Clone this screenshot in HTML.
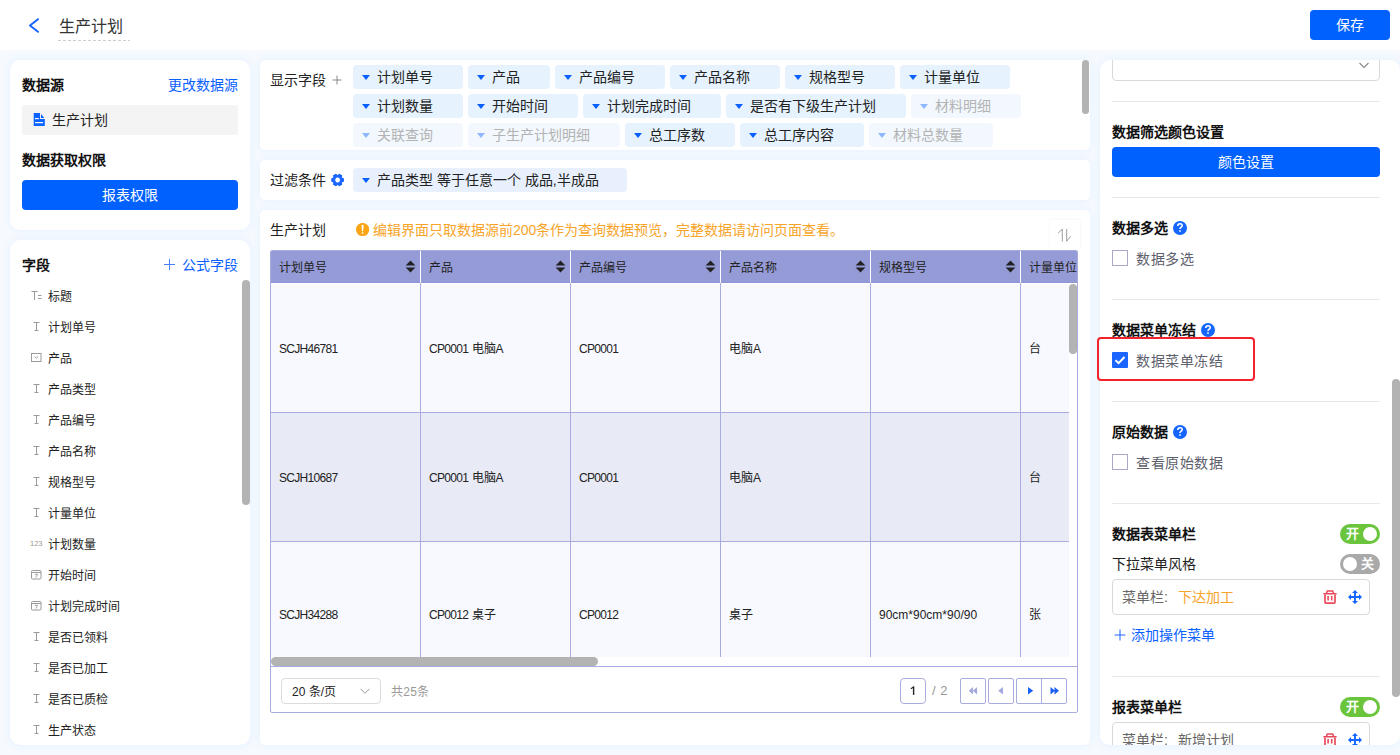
<!DOCTYPE html>
<html lang="zh-CN"><head><meta charset="utf-8">
<style>
*{box-sizing:border-box;margin:0;padding:0}
html,body{width:1400px;height:755px;overflow:hidden}
body{font-family:"Liberation Sans",sans-serif;background:#f6faff;color:#1a1a1a;position:relative;font-size:14px}
.a{position:absolute;white-space:nowrap}
.hdr{left:0;top:0;width:1400px;height:50px;background:#fff}
.card{background:#fff;border-radius:10px;box-shadow:0 0 8px rgba(40,130,250,0.09)}
.pan{background:#fff;border-radius:5px;box-shadow:0 0 8px rgba(40,130,250,0.09)}
.t14{font-size:14px;line-height:14px}
.t12{font-size:12px;line-height:12px}
.b{font-weight:bold;color:#111}
.blue{color:#0a5fff}
.btn{background:#0061ff;color:#fff;border-radius:4px;text-align:center}
.tag{height:24px;border-radius:4px;background:#e6f2fe;color:#222;font-size:14px;line-height:24px;padding-left:24px}
.tag i{position:absolute;left:8.5px;top:9.5px;width:0;height:0;border-left:4.5px solid transparent;border-right:4.5px solid transparent;border-top:5.5px solid #0a5fff}
.tag.dis{background:#f2f8fe;color:#b3b3b3}
.tag.dis i{border-top-color:#8db8ff}
.cell{font-size:12px;line-height:12px;color:#222}
.lt{letter-spacing:-0.7px}
</style></head><body>
<div class="a hdr"></div>
<svg class="a" style="left:27px;top:16px" width="14" height="19" viewBox="0 0 14 19"><path d="M11 3.2 L3 9.5 L11 15.8" fill="none" stroke="#1764ff" stroke-width="2" stroke-linecap="round" stroke-linejoin="round"/></svg>
<div class="a" style="left:59px;top:19px;font-size:16px;line-height:16px;color:#333">生产计划</div>
<div class="a" style="left:58px;top:40px;width:72px;height:1px;background:repeating-linear-gradient(90deg,#cfcfcf 0 3px,transparent 3px 5px)"></div>
<div class="a btn" style="left:1310px;top:10px;width:80px;height:30px;line-height:30px;font-size:14px">保存</div>
<div class="a card" style="left:10px;top:60px;width:240px;height:170px"></div>
<div class="a t14 b" style="left:22px;top:78px">数据源</div>
<div class="a t14 blue" style="left:168px;top:78px">更改数据源</div>
<div class="a" style="left:22px;top:105px;width:216px;height:30px;background:#f4f4f4;border-radius:2px"></div>
<svg class="a" style="left:33px;top:113px" width="12" height="13" viewBox="0 0 12 13"><path d="M0.7 0H7V6H11.8V13H0.7z" fill="#0d63ff"/><path d="M8 1L11.4 5H8z" fill="#0d63ff"/><rect x="2" y="5" width="3.8" height="1.2" fill="#fff"/><rect x="2" y="9" width="8" height="1.2" fill="#fff"/></svg>
<div class="a t14" style="left:52px;top:113px;color:#222">生产计划</div>
<div class="a t14 b" style="left:22px;top:153px">数据获取权限</div>
<div class="a btn" style="left:22px;top:180px;width:216px;height:30px;line-height:30px">报表权限</div>
<div class="a card" style="left:10px;top:240px;width:240px;height:505px"></div>
<div class="a t14 b" style="left:22px;top:258px">字段</div>
<svg class="a" style="left:164px;top:259px" width="11" height="11" viewBox="0 0 11 11"><path d="M5.5 0V11M0 5.5H11" stroke="#4a80ff" stroke-width="1"/></svg>
<div class="a t14 blue" style="left:182px;top:258px">公式字段</div>
<div class="a" style="left:242px;top:280px;width:8px;height:225px;background:#b3b3b3;border-radius:4px"></div>
<div class="a t12" style="left:48px;top:291px;color:#222">标题</div>
<svg class="a" style="left:31px;top:290px" width="11" height="11" viewBox="0 0 11 11"><path d="M0.5 1.5H6.5M3.5 1.5V10M7 5.5H10.5M7 8.5H10.5" stroke="#9a9a9a" stroke-width="1" fill="none"/></svg>
<div class="a t12" style="left:48px;top:322px;color:#222">计划单号</div>
<svg class="a" style="left:32px;top:321px" width="9" height="11" viewBox="0 0 9 11"><path d="M1.5 1.5H7.5M4.5 1.5V9.5M2.5 9.5H6.5" stroke="#9a9a9a" stroke-width="1" fill="none"/></svg>
<div class="a t12" style="left:48px;top:353px;color:#222">产品</div>
<svg class="a" style="left:30px;top:352px" width="12" height="11" viewBox="0 0 12 11"><rect x="1.5" y="1.5" width="9.5" height="8" fill="none" stroke="#9a9a9a" stroke-width="1"/><path d="M4.5 4.5L6.25 6.2L8 4.5" stroke="#9a9a9a" stroke-width="1" fill="none"/></svg>
<div class="a t12" style="left:48px;top:384px;color:#222">产品类型</div>
<svg class="a" style="left:32px;top:383px" width="9" height="11" viewBox="0 0 9 11"><path d="M1.5 1.5H7.5M4.5 1.5V9.5M2.5 9.5H6.5" stroke="#9a9a9a" stroke-width="1" fill="none"/></svg>
<div class="a t12" style="left:48px;top:415px;color:#222">产品编号</div>
<svg class="a" style="left:32px;top:414px" width="9" height="11" viewBox="0 0 9 11"><path d="M1.5 1.5H7.5M4.5 1.5V9.5M2.5 9.5H6.5" stroke="#9a9a9a" stroke-width="1" fill="none"/></svg>
<div class="a t12" style="left:48px;top:446px;color:#222">产品名称</div>
<svg class="a" style="left:32px;top:445px" width="9" height="11" viewBox="0 0 9 11"><path d="M1.5 1.5H7.5M4.5 1.5V9.5M2.5 9.5H6.5" stroke="#9a9a9a" stroke-width="1" fill="none"/></svg>
<div class="a t12" style="left:48px;top:477px;color:#222">规格型号</div>
<svg class="a" style="left:32px;top:476px" width="9" height="11" viewBox="0 0 9 11"><path d="M1.5 1.5H7.5M4.5 1.5V9.5M2.5 9.5H6.5" stroke="#9a9a9a" stroke-width="1" fill="none"/></svg>
<div class="a t12" style="left:48px;top:508px;color:#222">计量单位</div>
<svg class="a" style="left:32px;top:507px" width="9" height="11" viewBox="0 0 9 11"><path d="M1.5 1.5H7.5M4.5 1.5V9.5M2.5 9.5H6.5" stroke="#9a9a9a" stroke-width="1" fill="none"/></svg>
<div class="a t12" style="left:48px;top:539px;color:#222">计划数量</div>
<div class="a" style="left:30px;top:540px;font-size:7.5px;line-height:8px;color:#9a9a9a;letter-spacing:0px">123</div>
<div class="a t12" style="left:48px;top:570px;color:#222">开始时间</div>
<svg class="a" style="left:30px;top:569px" width="12" height="11" viewBox="0 0 12 11"><rect x="1.5" y="1.5" width="9.5" height="8.5" rx="1" fill="none" stroke="#9a9a9a" stroke-width="1"/><path d="M1.5 3.5H11" stroke="#9a9a9a" stroke-width="1"/><path d="M4.8 5.3H7.6L5.8 8.5" stroke="#9a9a9a" stroke-width="0.9" fill="none"/></svg>
<div class="a t12" style="left:48px;top:601px;color:#222">计划完成时间</div>
<svg class="a" style="left:30px;top:600px" width="12" height="11" viewBox="0 0 12 11"><rect x="1.5" y="1.5" width="9.5" height="8.5" rx="1" fill="none" stroke="#9a9a9a" stroke-width="1"/><path d="M1.5 3.5H11" stroke="#9a9a9a" stroke-width="1"/><path d="M4.8 5.3H7.6L5.8 8.5" stroke="#9a9a9a" stroke-width="0.9" fill="none"/></svg>
<div class="a t12" style="left:48px;top:632px;color:#222">是否已领料</div>
<svg class="a" style="left:32px;top:631px" width="9" height="11" viewBox="0 0 9 11"><path d="M1.5 1.5H7.5M4.5 1.5V9.5M2.5 9.5H6.5" stroke="#9a9a9a" stroke-width="1" fill="none"/></svg>
<div class="a t12" style="left:48px;top:663px;color:#222">是否已加工</div>
<svg class="a" style="left:32px;top:662px" width="9" height="11" viewBox="0 0 9 11"><path d="M1.5 1.5H7.5M4.5 1.5V9.5M2.5 9.5H6.5" stroke="#9a9a9a" stroke-width="1" fill="none"/></svg>
<div class="a t12" style="left:48px;top:694px;color:#222">是否已质检</div>
<svg class="a" style="left:32px;top:693px" width="9" height="11" viewBox="0 0 9 11"><path d="M1.5 1.5H7.5M4.5 1.5V9.5M2.5 9.5H6.5" stroke="#9a9a9a" stroke-width="1" fill="none"/></svg>
<div class="a t12" style="left:48px;top:725px;color:#222">生产状态</div>
<svg class="a" style="left:32px;top:724px" width="9" height="11" viewBox="0 0 9 11"><path d="M1.5 1.5H7.5M4.5 1.5V9.5M2.5 9.5H6.5" stroke="#9a9a9a" stroke-width="1" fill="none"/></svg>
<div class="a pan" style="left:260px;top:60px;width:830px;height:90px"></div>
<div class="a t14" style="left:270px;top:73px;color:#222">显示字段</div>
<svg class="a" style="left:332px;top:75px" width="10" height="10" viewBox="0 0 10 10"><path d="M5 0.5V9.5M0.5 5H9.5" stroke="#888" stroke-width="1"/></svg>
<div class="a tag" style="left:353px;top:65px;width:110px"><i></i>计划单号</div>
<div class="a tag" style="left:468px;top:65px;width:82px"><i></i>产品</div>
<div class="a tag" style="left:555px;top:65px;width:110px"><i></i>产品编号</div>
<div class="a tag" style="left:670px;top:65px;width:110px"><i></i>产品名称</div>
<div class="a tag" style="left:785px;top:65px;width:110px"><i></i>规格型号</div>
<div class="a tag" style="left:900px;top:65px;width:110px"><i></i>计量单位</div>
<div class="a tag" style="left:353px;top:94px;width:110px"><i></i>计划数量</div>
<div class="a tag" style="left:468px;top:94px;width:110px"><i></i>开始时间</div>
<div class="a tag" style="left:583px;top:94px;width:138px"><i></i>计划完成时间</div>
<div class="a tag" style="left:726px;top:94px;width:180px"><i></i>是否有下级生产计划</div>
<div class="a tag dis" style="left:911px;top:94px;width:110px"><i></i>材料明细</div>
<div class="a tag dis" style="left:353px;top:123px;width:110px"><i></i>关联查询</div>
<div class="a tag dis" style="left:468px;top:123px;width:152px"><i></i>子生产计划明细</div>
<div class="a tag" style="left:625px;top:123px;width:110px"><i></i>总工序数</div>
<div class="a tag" style="left:740px;top:123px;width:124px"><i></i>总工序内容</div>
<div class="a tag dis" style="left:869px;top:123px;width:124px"><i></i>材料总数量</div>
<div class="a" style="left:1082px;top:60px;width:7px;height:54px;background:#b3b3b3;border-radius:4px"></div>
<div class="a pan" style="left:260px;top:160px;width:830px;height:40px"></div>
<div class="a t14" style="left:270px;top:173px;color:#222">过滤条件</div>
<svg class="a" style="left:331px;top:173px" width="14" height="14" viewBox="0 0 14 14"><path fill="#1a66ff" fill-rule="evenodd" d="M10.93 4.50 L13.00 5.40 L13.00 8.60 L10.93 9.50 L11.18 11.75 L8.42 13.34 L6.60 12.00 L4.78 13.34 L2.02 11.75 L2.27 9.50 L0.20 8.60 L0.20 5.40 L2.27 4.50 L2.02 2.25 L4.78 0.66 L6.60 2.00 L8.42 0.66 L11.18 2.25z M6.6 4.6a2.4 2.4 0 1 0 0.001 0z"/></svg>
<div class="a" style="left:353px;top:168px;width:274px;height:24px;border-radius:4px;background:#e8f0fd;font-size:14px;line-height:24px;padding-left:24px;color:#222"><i style="position:absolute;left:9px;top:10px;border-left:4px solid transparent;border-right:4px solid transparent;border-top:5px solid #0a5fff"></i>产品类型 等于任意一个 成品,半成品</div>
<div class="a pan" style="left:260px;top:210px;width:830px;height:535px"></div>
<div class="a t14" style="left:270px;top:223px;color:#222">生产计划</div>
<svg class="a" style="left:356px;top:223px" width="14" height="14" viewBox="0 0 14 14"><circle cx="6.6" cy="6.5" r="6.6" fill="#fba414"/><path d="M5.5 1.9H7.7L7.15 8.3H6.05z" fill="#fff"/><rect x="5.9" y="9.2" width="1.4" height="1.5" fill="#fff"/></svg>
<div class="a t14" style="left:373px;top:223px;color:#f7a42a">编辑界面只取数据源前200条作为查询数据预览，完整数据请访问页面查看。</div>
<div class="a" style="left:1050px;top:220px;width:30px;height:30px;background:#fff;box-shadow:0 0 3px rgba(0,0,0,0.06)"></div>
<svg class="a" style="left:1056px;top:227px" width="18" height="16" viewBox="0 0 18 16"><path d="M6.3 2V14.5M6.3 2.2L2.1 6.1M10.7 2V14.4M10.7 14.2L14.6 9.3" stroke="#9d9d9d" stroke-width="1" fill="none"/></svg>
<div class="a" style="left:270px;top:250px;width:808px;height:463px;border:1px solid #a9acdf;border-radius:2px;overflow:hidden;background:#fff">
<div class="a" style="left:0;top:0;width:808px;height:32px;background:#959bd6;border-bottom:1px solid #8d93d3"></div>
<div class="a t12" style="left:8px;top:11px;color:#222">计划单号</div>
<svg class="a" style="left:134px;top:9px" width="11" height="13" viewBox="0 0 11 13"><path d="M5.5 0.6L10.4 5.6H0.6z M5.5 12.4L10.4 7.4H0.6z" fill="#222"/></svg>
<div class="a" style="left:149px;top:0;width:1px;height:32px;background:#fff"></div>
<div class="a t12" style="left:158px;top:11px;color:#222">产品</div>
<svg class="a" style="left:284px;top:9px" width="11" height="13" viewBox="0 0 11 13"><path d="M5.5 0.6L10.4 5.6H0.6z M5.5 12.4L10.4 7.4H0.6z" fill="#222"/></svg>
<div class="a" style="left:299px;top:0;width:1px;height:32px;background:#fff"></div>
<div class="a t12" style="left:308px;top:11px;color:#222">产品编号</div>
<svg class="a" style="left:434px;top:9px" width="11" height="13" viewBox="0 0 11 13"><path d="M5.5 0.6L10.4 5.6H0.6z M5.5 12.4L10.4 7.4H0.6z" fill="#222"/></svg>
<div class="a" style="left:449px;top:0;width:1px;height:32px;background:#fff"></div>
<div class="a t12" style="left:458px;top:11px;color:#222">产品名称</div>
<svg class="a" style="left:584px;top:9px" width="11" height="13" viewBox="0 0 11 13"><path d="M5.5 0.6L10.4 5.6H0.6z M5.5 12.4L10.4 7.4H0.6z" fill="#222"/></svg>
<div class="a" style="left:599px;top:0;width:1px;height:32px;background:#fff"></div>
<div class="a t12" style="left:608px;top:11px;color:#222">规格型号</div>
<svg class="a" style="left:734px;top:9px" width="11" height="13" viewBox="0 0 11 13"><path d="M5.5 0.6L10.4 5.6H0.6z M5.5 12.4L10.4 7.4H0.6z" fill="#222"/></svg>
<div class="a" style="left:749px;top:0;width:1px;height:32px;background:#fff"></div>
<div class="a t12" style="left:758px;top:11px;color:#222">计量单位</div>
<div class="a" style="left:0;top:32px;width:798px;height:374px;overflow:hidden">
<div class="a" style="left:0;top:0px;width:798px;height:129px;background:#f8f9fe;border-top:1px solid #fff"></div>
<div class="a cell" style="left:8px;top:60px"><span class="lt">SCJH46781</span></div>
<div class="a" style="left:149px;top:0px;width:1px;height:129px;background:#a9acdf"></div>
<div class="a cell" style="left:158px;top:60px"><span class="lt">CP0001</span> 电脑<span class="lt">A</span></div>
<div class="a" style="left:299px;top:0px;width:1px;height:129px;background:#a9acdf"></div>
<div class="a cell" style="left:308px;top:60px"><span class="lt">CP0001</span></div>
<div class="a" style="left:449px;top:0px;width:1px;height:129px;background:#a9acdf"></div>
<div class="a cell" style="left:458px;top:60px">电脑<span class="lt">A</span></div>
<div class="a" style="left:599px;top:0px;width:1px;height:129px;background:#a9acdf"></div>
<div class="a" style="left:749px;top:0px;width:1px;height:129px;background:#a9acdf"></div>
<div class="a cell" style="left:758px;top:60px">台</div>
<div class="a" style="left:0;top:129px;width:798px;height:129px;background:#e8eaf6;border-top:1px solid #a9acdf"></div>
<div class="a cell" style="left:8px;top:189px"><span class="lt">SCJH10687</span></div>
<div class="a" style="left:149px;top:129px;width:1px;height:129px;background:#a9acdf"></div>
<div class="a cell" style="left:158px;top:189px"><span class="lt">CP0001</span> 电脑<span class="lt">A</span></div>
<div class="a" style="left:299px;top:129px;width:1px;height:129px;background:#a9acdf"></div>
<div class="a cell" style="left:308px;top:189px"><span class="lt">CP0001</span></div>
<div class="a" style="left:449px;top:129px;width:1px;height:129px;background:#a9acdf"></div>
<div class="a cell" style="left:458px;top:189px">电脑<span class="lt">A</span></div>
<div class="a" style="left:599px;top:129px;width:1px;height:129px;background:#a9acdf"></div>
<div class="a" style="left:749px;top:129px;width:1px;height:129px;background:#a9acdf"></div>
<div class="a cell" style="left:758px;top:189px">台</div>
<div class="a" style="left:0;top:258px;width:798px;height:169px;background:#f8f9fe;border-top:1px solid #a9acdf"></div>
<div class="a cell" style="left:8px;top:326px"><span class="lt">SCJH34288</span></div>
<div class="a" style="left:149px;top:258px;width:1px;height:169px;background:#a9acdf"></div>
<div class="a cell" style="left:158px;top:326px"><span class="lt">CP0012</span> 桌子</div>
<div class="a" style="left:299px;top:258px;width:1px;height:169px;background:#a9acdf"></div>
<div class="a cell" style="left:308px;top:326px"><span class="lt">CP0012</span></div>
<div class="a" style="left:449px;top:258px;width:1px;height:169px;background:#a9acdf"></div>
<div class="a cell" style="left:458px;top:326px">桌子</div>
<div class="a" style="left:599px;top:258px;width:1px;height:169px;background:#a9acdf"></div>
<div class="a cell" style="left:608px;top:326px">90cm*90cm*90/90</div>
<div class="a" style="left:749px;top:258px;width:1px;height:169px;background:#a9acdf"></div>
<div class="a cell" style="left:758px;top:326px">张</div>
</div>
<div class="a" style="left:798px;top:32px;width:10px;height:383px;background:#fff"></div>
<div class="a" style="left:798px;top:33px;width:8px;height:70px;background:#b3b3b3;border-radius:4px"></div>
<div class="a" style="left:0;top:406px;width:808px;height:9px;background:#fff"></div>
<div class="a" style="left:0;top:406px;width:327px;height:9px;background:#b3b3b3;border-radius:4.5px"></div>
<div class="a" style="left:0;top:415px;width:808px;height:1px;background:#a9acdf"></div>
<div class="a" style="left:10px;top:427px;width:100px;height:26px;border:1px solid #dcdcdc;border-radius:4px"></div>
<div class="a t12" style="left:21px;top:435px;color:#222">20 条/页</div>
<svg class="a" style="left:88px;top:436px" width="12" height="8" viewBox="0 0 12 8"><path d="M1.5 1.8L6 6.3L10.5 1.8" stroke="#999" stroke-width="1" fill="none"/></svg>
<div class="a t12" style="left:120px;top:435px;color:#999;letter-spacing:0.3px">共25条</div>
<div class="a" style="left:629px;top:427px;width:26px;height:26px;border:1px solid #a9acdf;border-radius:4px"></div><svg class="a" style="left:639px;top:435px" width="6" height="10" viewBox="0 0 6 10"><path d="M3.6 0.4V8.9" stroke="#222" stroke-width="1.4"/><path d="M3.6 0.9L0.9 2.8" stroke="#222" stroke-width="1.1"/></svg>
<div class="a" style="left:661px;top:433px;font-size:13px;line-height:13px;color:#999;letter-spacing:0.5px">/ 2</div>
<div class="a" style="left:689px;top:427px;width:26px;height:26px;border:1px solid #a9acdf;border-radius:2px"></div>
<div class="a" style="left:717px;top:427px;width:26px;height:26px;border:1px solid #a9acdf;border-radius:2px"></div>
<div class="a" style="left:745px;top:427px;width:51px;height:26px;border:1px solid #a9acdf;border-radius:2px"></div>
<div class="a" style="left:770px;top:427px;width:1px;height:26px;background:#a9acdf"></div>
<svg class="a" style="left:689px;top:427px" width="108" height="26" viewBox="0 0 108 26">
<path d="M13 9L8.7 12.8L13 16.6z M17.1 9L12.8 12.8L17.1 16.6z" fill="#a4a9de"/>
<path d="M43 9L38.2 12.8L43 16.6z" fill="#a4a9de"/>
<path d="M68 9L73.2 12.8L68 16.6z" fill="#1a5ff5"/>
<path d="M90.5 9L95 12.8L90.5 16.6z M94.5 9L99 12.8L94.5 16.6z" fill="#1a5ff5"/>
</svg>
</div>
<div class="a card" style="left:1100px;top:60px;width:300px;height:685px;border-radius:10px"></div>
<div class="a" style="left:1100px;top:60px;width:300px;height:685px;overflow:hidden;border-radius:10px"><div class="a" style="left:-1100px;top:-60px;width:1400px;height:755px">
<div class="a" style="left:1112px;top:40px;width:268px;height:41px;border:1px solid #d9d9d9;border-radius:4px;background:#fff"></div>
<svg class="a" style="left:1358px;top:61px" width="12" height="9" viewBox="0 0 12 9"><path d="M1.5 2L6 6.5L10.5 2" stroke="#888" stroke-width="1.1" fill="none"/></svg>
<div class="a" style="left:1112px;top:101px;width:268px;height:1px;background:#e8e8e8"></div>
<div class="a t14 b" style="left:1112px;top:125px">数据筛选颜色设置</div>
<div class="a btn" style="left:1112px;top:147px;width:268px;height:30px;line-height:30px;font-size:14px">颜色设置</div>
<div class="a" style="left:1112px;top:197px;width:268px;height:1px;background:#e8e8e8"></div>
<div class="a t14 b" style="left:1112px;top:221px">数据多选</div><svg class="a" style="left:1173px;top:221px" width="14" height="14" viewBox="0 0 14 14"><circle cx="7" cy="7" r="7" fill="#1466ff"/><path d="M4.75 5C4.75 3.6 5.75 2.65 7 2.65C8.3 2.65 9.25 3.45 9.25 4.6C9.25 5.6 8.6 6.05 7.9 6.45C7.3 6.85 7 7.2 7 7.95" stroke="#fff" stroke-width="1.5" fill="none"/><rect x="6.25" y="9.2" width="1.5" height="1.6" fill="#fff"/></svg>
<div class="a" style="left:1112px;top:250px;width:16px;height:16px;border:1px solid #a9a8c6;border-radius:0;background:#fff"></div><div class="a t14" style="left:1136px;top:252px;color:#5d606c;letter-spacing:0.6px">数据多选</div>
<div class="a" style="left:1112px;top:299px;width:268px;height:1px;background:#e8e8e8"></div>
<div class="a t14 b" style="left:1112px;top:323px">数据菜单冻结</div><svg class="a" style="left:1201px;top:323px" width="14" height="14" viewBox="0 0 14 14"><circle cx="7" cy="7" r="7" fill="#1466ff"/><path d="M4.75 5C4.75 3.6 5.75 2.65 7 2.65C8.3 2.65 9.25 3.45 9.25 4.6C9.25 5.6 8.6 6.05 7.9 6.45C7.3 6.85 7 7.2 7 7.95" stroke="#fff" stroke-width="1.5" fill="none"/><rect x="6.25" y="9.2" width="1.5" height="1.6" fill="#fff"/></svg>
<div class="a" style="left:1112px;top:352px;width:16px;height:16px;border-radius:1px;background:#1a66ff"></div><svg class="a" style="left:1112px;top:352px" width="16" height="16" viewBox="0 0 16 16"><path d="M3.5 8.2L6.6 11.2L12.5 5" stroke="#fff" stroke-width="2" fill="none"/></svg>
<div class="a t14" style="left:1136px;top:354px;color:#5d606c;letter-spacing:0.6px">数据菜单冻结</div>
<div class="a" style="left:1112px;top:401px;width:268px;height:1px;background:#e8e8e8"></div>
<div class="a t14 b" style="left:1112px;top:425px">原始数据</div><svg class="a" style="left:1173px;top:425px" width="14" height="14" viewBox="0 0 14 14"><circle cx="7" cy="7" r="7" fill="#1466ff"/><path d="M4.75 5C4.75 3.6 5.75 2.65 7 2.65C8.3 2.65 9.25 3.45 9.25 4.6C9.25 5.6 8.6 6.05 7.9 6.45C7.3 6.85 7 7.2 7 7.95" stroke="#fff" stroke-width="1.5" fill="none"/><rect x="6.25" y="9.2" width="1.5" height="1.6" fill="#fff"/></svg>
<div class="a" style="left:1112px;top:454px;width:16px;height:16px;border:1px solid #a9a8c6;border-radius:0;background:#fff"></div><div class="a t14" style="left:1136px;top:456px;color:#5d606c;letter-spacing:0.6px">查看原始数据</div>
<div class="a" style="left:1112px;top:503px;width:268px;height:1px;background:#e8e8e8"></div>
<div class="a t14 b" style="left:1112px;top:527px">数据表菜单栏</div><div class="a" style="left:1340px;top:524px;width:40px;height:20px;border-radius:10px;background:#6ac53d"></div><div class="a" style="left:1363px;top:527px;width:14px;height:14px;border-radius:7px;background:#fff"></div><div class="a" style="left:1346px;top:527px;font-size:13px;line-height:13px;color:#fff;font-weight:bold">开</div>
<div class="a t14" style="left:1112px;top:557px;color:#222">下拉菜单风格</div><div class="a" style="left:1340px;top:554px;width:40px;height:20px;border-radius:10px;background:#a9a9a9"></div><div class="a" style="left:1343px;top:557px;width:14px;height:14px;border-radius:7px;background:#fff"></div><div class="a" style="left:1361px;top:557px;font-size:13px;line-height:13px;color:#fff;font-weight:bold">关</div>
<div class="a" style="left:1112px;top:579px;width:258px;height:36px;border:1px solid #d9d9d9;border-radius:4px"></div>
<div class="a t14" style="left:1122px;top:590px;color:#666"><span style="display:inline-block;width:56px">菜单栏<span style="display:inline-block;width:14px;text-align:left">:</span></span><span style="color:#f7a42a">下达加工</span></div><svg class="a" style="left:1323px;top:590px" width="14" height="15" viewBox="0 0 14 15"><path d="M3.5 3.2L4.3 0.9H9.7L10.5 3.2" stroke="#ea4a5a" stroke-width="1.5" fill="none"/><rect x="0.3" y="2.9" width="13.4" height="1.7" rx="0.5" fill="#ea4a5a"/><path d="M2 4.5V12.1a1 1 0 0 0 1 1h8a1 1 0 0 0 1-1V4.5" stroke="#ea4a5a" stroke-width="1.7" fill="none"/><path d="M5.1 5.9V10.4M8.7 5.9V10.4" stroke="#ea4a5a" stroke-width="1.6"/></svg><svg class="a" style="left:1348px;top:590px" width="14" height="14" viewBox="0 0 14 14"><path d="M7 1V13M1 7H13" stroke="#1466ff" stroke-width="1.9"/><path d="M7 0L10 3H4z M7 14L10 11H4z M0 7L3 4V10z M14 7L11 4V10z" fill="#1466ff"/></svg>
<svg class="a" style="left:1114px;top:629px" width="12" height="12" viewBox="0 0 12 12"><path d="M6 0.5V11.5M0.5 6H11.5" stroke="#1a66ff" stroke-width="1"/></svg><div class="a t14 blue" style="left:1131px;top:628px">添加操作菜单</div>
<div class="a" style="left:1112px;top:676px;width:268px;height:1px;background:#e8e8e8"></div>
<div class="a t14 b" style="left:1112px;top:700px">报表菜单栏</div><div class="a" style="left:1340px;top:697px;width:40px;height:20px;border-radius:10px;background:#6ac53d"></div><div class="a" style="left:1363px;top:700px;width:14px;height:14px;border-radius:7px;background:#fff"></div><div class="a" style="left:1346px;top:700px;font-size:13px;line-height:13px;color:#fff;font-weight:bold">开</div>
<div class="a" style="left:1112px;top:722px;width:258px;height:36px;border:1px solid #d9d9d9;border-radius:4px"></div>
<div class="a t14" style="left:1122px;top:733px;color:#666"><span style="display:inline-block;width:56px">菜单栏<span style="display:inline-block;width:14px;text-align:left">:</span></span>新增计划</div><svg class="a" style="left:1323px;top:733px" width="14" height="15" viewBox="0 0 14 15"><path d="M3.5 3.2L4.3 0.9H9.7L10.5 3.2" stroke="#ea4a5a" stroke-width="1.5" fill="none"/><rect x="0.3" y="2.9" width="13.4" height="1.7" rx="0.5" fill="#ea4a5a"/><path d="M2 4.5V12.1a1 1 0 0 0 1 1h8a1 1 0 0 0 1-1V4.5" stroke="#ea4a5a" stroke-width="1.7" fill="none"/><path d="M5.1 5.9V10.4M8.7 5.9V10.4" stroke="#ea4a5a" stroke-width="1.6"/></svg><svg class="a" style="left:1348px;top:733px" width="14" height="14" viewBox="0 0 14 14"><path d="M7 1V13M1 7H13" stroke="#1466ff" stroke-width="1.9"/><path d="M7 0L10 3H4z M7 14L10 11H4z M0 7L3 4V10z M14 7L11 4V10z" fill="#1466ff"/></svg>
<div class="a" style="left:1392px;top:379px;width:8px;height:318px;background:#b3b3b3;border-radius:4px"></div>
</div></div>
<div class="a" style="left:1097px;top:337px;width:158px;height:44px;border:2.6px solid #f5222d;border-radius:4px"></div>
</body></html>
